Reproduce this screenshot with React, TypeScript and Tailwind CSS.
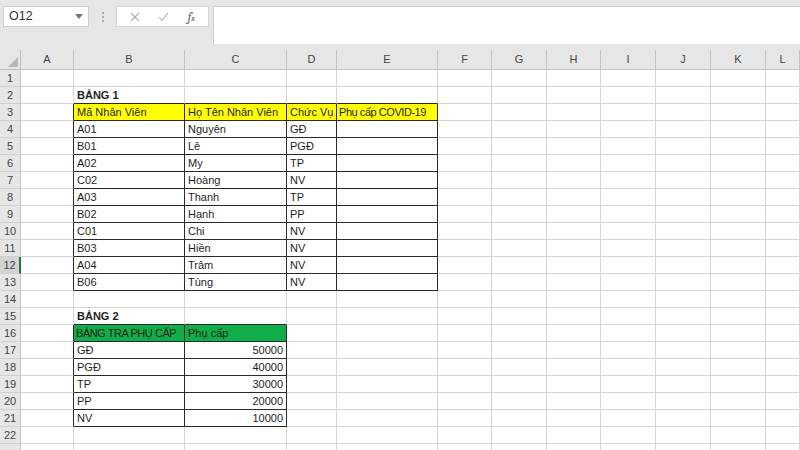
import React from "react";

const cols = ["A", "B", "C", "D", "E", "F", "G", "H", "I", "J", "K", "L"];
const GRID = "#d4d4d4";
const LINE = "#2a2a2a";

type Cell = { text: string; bold?: boolean; right?: boolean; bg?: string; tight?: boolean };

const data: Record<string, Cell> = {};
const put = (r: number, c: number, text: string, extra: Partial<Cell> = {}) => {
  data[`${r}-${c}`] = { text, ...extra };
};

put(2, 1, "BẢNG 1", { bold: true });
put(3, 1, "Mã Nhân Viên", { bg: "yellow" });
put(3, 2, "Họ Tên Nhân Viên", { bg: "yellow" });
put(3, 3, "Chức Vụ", { bg: "yellow" });
put(3, 4, "Phụ cấp COVID-19", { bg: "yellow", tight: true });
const staff = [
  ["A01", "Nguyên", "GĐ"],
  ["B01", "Lê", "PGĐ"],
  ["A02", "My", "TP"],
  ["C02", "Hoàng", "NV"],
  ["A03", "Thanh", "TP"],
  ["B02", "Hạnh", "PP"],
  ["C01", "Chi", "NV"],
  ["B03", "Hiền", "NV"],
  ["A04", "Trâm", "NV"],
  ["B06", "Tùng", "NV"],
];
staff.forEach((s, i) => s.forEach((t, j) => put(4 + i, j + 1, t)));

put(15, 1, "BẢNG 2", { bold: true });
put(16, 1, "BẢNG TRA PHỤ CẤP", { bg: "green", tight: true });
put(16, 2, "Phụ cấp", { bg: "green" });
const rates = [
  ["GĐ", "50000"],
  ["PGĐ", "40000"],
  ["TP", "30000"],
  ["PP", "20000"],
  ["NV", "10000"],
];
rates.forEach((r, i) => {
  put(17 + i, 1, r[0]);
  put(17 + i, 2, r[1], { right: true });
});

function boxed(r: number, c: number) {
  if (r >= 3 && r <= 13 && c >= 1 && c <= 4) return true;
  if (r >= 16 && r <= 21 && c >= 1 && c <= 2) return true;
  return false;
}

function GridCell({ r, c }: { r: number; c: number }) {
  const cell = data[`${r}-${c}`];
  const rightDark = boxed(r, c) || boxed(r, c + 1);
  const bottomDark = boxed(r, c) || boxed(r + 1, c);
  const bg =
    cell?.bg === "yellow" ? "bg-[#ffff00]" : cell?.bg === "green" ? "bg-[#0fae48]" : "bg-white";
  return (
    <div
      className={`h-[17px] flex items-end overflow-hidden whitespace-nowrap px-[3px] pb-[1px] text-[11px] leading-[14px] text-[#1e1e1e] ${bg} ${
        cell?.right ? "justify-end" : ""
      } ${cell?.bold ? "font-bold" : ""} ${cell?.tight ? "tracking-[-0.45px] pl-[2px]" : ""}`}
      style={{
        borderRight: `1px solid ${rightDark ? LINE : GRID}`,
        borderBottom: `1px solid ${bottomDark ? LINE : GRID}`,
      }}
    >
      {cell?.text}
    </div>
  );
}

export default function App() {
  const rows = Array.from({ length: 23 }, (_, i) => i + 1);
  return (
    <div
      className="w-[800px] h-[450px] overflow-hidden bg-[#e6e6e6]"
      style={{ fontFamily: '"Liberation Sans", Arial, sans-serif' }}
    >
      {/* formula bar */}
      <div className="h-[50px] flex items-start pt-[6px] pl-[3px]">
        <div className="w-[86px] h-[21px] bg-white border border-[#cfcfcf] flex items-center justify-between px-[5px]">
          <span className="text-[12.5px] text-[#333]">O12</span>
          <svg width="8" height="5" viewBox="0 0 8 5">
            <path d="M0 0 L8 0 L4 5 Z" fill="#777" />
          </svg>
        </div>
        <div className="w-[27px] h-[21px] flex flex-col items-center justify-center gap-[2px]">
          <span className="w-[2px] h-[2px] bg-[#aaa]" />
          <span className="w-[2px] h-[2px] bg-[#aaa]" />
          <span className="w-[2px] h-[2px] bg-[#aaa]" />
        </div>
        <div className="w-[93px] h-[21px] bg-white border border-[#d6d6d6] flex items-center justify-around px-[4px]">
          <svg width="10" height="10" viewBox="0 0 10 10">
            <path d="M1 1 L9 9 M9 1 L1 9" stroke="#b0b0b0" strokeWidth="1.1" />
          </svg>
          <svg width="11" height="10" viewBox="0 0 11 10">
            <path d="M1 5 L4 8.5 L10 1" stroke="#b0b0b0" strokeWidth="1.1" fill="none" />
          </svg>
          <span className="text-[12px] italic font-serif text-[#555] leading-none">
            f<span className="text-[8px]">x</span>
          </span>
        </div>
        <div className="ml-[4px] flex-1 h-[38px] bg-white border-t border-l border-[#d0d0d0]" />
      </div>

      {/* sheet */}
      <div className="grid grid-cols-[21px_53px_111px_102px_50px_101px_54px_55px_54px_55px_55px_55px_1fr]">
        <div className="h-[20px] bg-[#e6e6e6] border-r border-b border-[#bdbdbd] flex items-end justify-end p-[2px]">
          <svg width="10" height="10" viewBox="0 0 10 10">
            <path d="M10 0 L10 10 L0 10 Z" fill="#b7b7b7" />
          </svg>
        </div>
        {cols.map((c) => (
          <div
            key={c}
            className="h-[20px] bg-[#e6e6e6] border-r border-b border-[#c4c4c4] flex items-center justify-center text-[11px] text-[#444]"
          >
            {c}
          </div>
        ))}
        {rows.map((r) => (
          <React.Fragment key={r}>
            <div
              className={`h-[17px] flex items-center justify-center text-[11px] text-[#444] border-b border-[#cfcfcf] ${
                r === 12
                  ? "bg-[#d3d3d3] border-r-2 border-r-[#217346]"
                  : "bg-[#e6e6e6] border-r border-r-[#c4c4c4]"
              }`}
            >
              {r < 23 ? r : ""}
            </div>
            {cols.map((_, c) => (
              <GridCell key={c} r={r} c={c} />
            ))}
          </React.Fragment>
        ))}
      </div>
    </div>
  );
}
